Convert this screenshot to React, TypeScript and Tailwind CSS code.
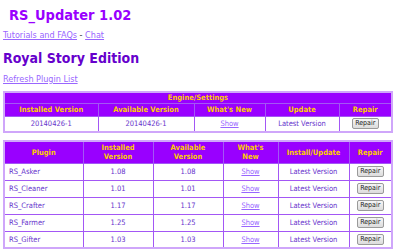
const engineCols = [
  { label: "Installed Version", w: "w-[94px]" },
  { label: "Available Version", w: "w-[96px]" },
  { label: "What's New", w: "w-[71px]" },
  { label: "Update", w: "w-[74px]" },
  { label: "Repair", w: "" },
];

const plugins = [
  { name: "RS_Asker", installed: "1.08", available: "1.08" },
  { name: "RS_Cleaner", installed: "1.01", available: "1.01" },
  { name: "RS_Crafter", installed: "1.17", available: "1.17" },
  { name: "RS_Farmer", installed: "1.25", available: "1.25" },
  { name: "RS_Gifter", installed: "1.03", available: "1.03" },
];

const RepairButton = () => (
  <button className="h-[11px] w-[27px] rounded-[2px] border border-[#9a9a9a] bg-gradient-to-b from-[#f6f6f6] to-[#dcdcdc] text-[7px] leading-[9px] text-[#222]">
    Repair
  </button>
);

const th = "border border-[#a357f5] bg-[#9900ff] px-1 py-0 font-bold text-[#ffcc00]";
const td = "border border-[#a357f5] px-1 py-0 text-[#6633cc]";

export default function App() {
  return (
    <div className="h-[249px] overflow-hidden bg-white px-[3px] font-['DejaVu_Sans_Condensed','DejaVu_Sans',sans-serif]">
      <h1 className="pl-[6px] pt-[6px] text-[14.5px] leading-[18px] font-bold text-[#9900ff]">RS_Updater 1.02</h1>
      <div className="mt-[5px] text-[9px] leading-[12px] text-[#9966ff]">
        <a href="#" className="underline">Tutorials and FAQs</a>
        <span className="text-[#333]"> - </span>
        <a href="#" className="underline">Chat</a>
      </div>
      <h2 className="mt-[9px] text-[14px] leading-[17px] font-bold text-[#6600cc]">Royal Story Edition</h2>
      <div className="mt-[6px] text-[9px] leading-[12px]">
        <a href="#" className="text-[#9966ff] underline">Refresh Plugin List</a>
      </div>

      <table className="mt-[6px] w-[390px] border-collapse border-2 border-[#cfa6fa] text-center text-[7.5px] leading-[9px]">
        <thead>
          <tr className="h-[11px]">
            <th colSpan={5} className={th}>Engine/Settings</th>
          </tr>
          <tr className="h-[13px]">
            {engineCols.map((c) => (
              <th key={c.label} className={`${th} ${c.w}`}>{c.label}</th>
            ))}
          </tr>
        </thead>
        <tbody>
          <tr className="h-[16px]">
            <td className={td}>20140426-1</td>
            <td className={td}>20140426-1</td>
            <td className={td}><a href="#" className="text-[#9966ff] underline">Show</a></td>
            <td className={td}>Latest Version</td>
            <td className={td}><RepairButton /></td>
          </tr>
        </tbody>
      </table>

      <table className="mt-[7px] w-[390px] border-collapse border-2 border-[#cfa6fa] text-center text-[7.5px] leading-[9px]">
        <thead>
          <tr className="h-[22px]">
            <th className={`${th} w-[79px]`}>Plugin</th>
            <th className={`${th} w-[70px]`}>Installed<br />Version</th>
            <th className={`${th} w-[70px]`}>Available<br />Version</th>
            <th className={`${th} w-[55px]`}>What's<br />New</th>
            <th className={`${th} w-[71px]`}>Install/Update</th>
            <th className={th}>Repair</th>
          </tr>
        </thead>
        <tbody>
          {plugins.map((p) => (
            <tr key={p.name} className="h-[17px]">
              <td className={`${td} text-left`}>{p.name}</td>
              <td className={td}>{p.installed}</td>
              <td className={td}>{p.available}</td>
              <td className={td}><a href="#" className="text-[#9966ff] underline">Show</a></td>
              <td className={td}>Latest Version</td>
              <td className={td}><RepairButton /></td>
            </tr>
          ))}
        </tbody>
      </table>
    </div>
  );
}
